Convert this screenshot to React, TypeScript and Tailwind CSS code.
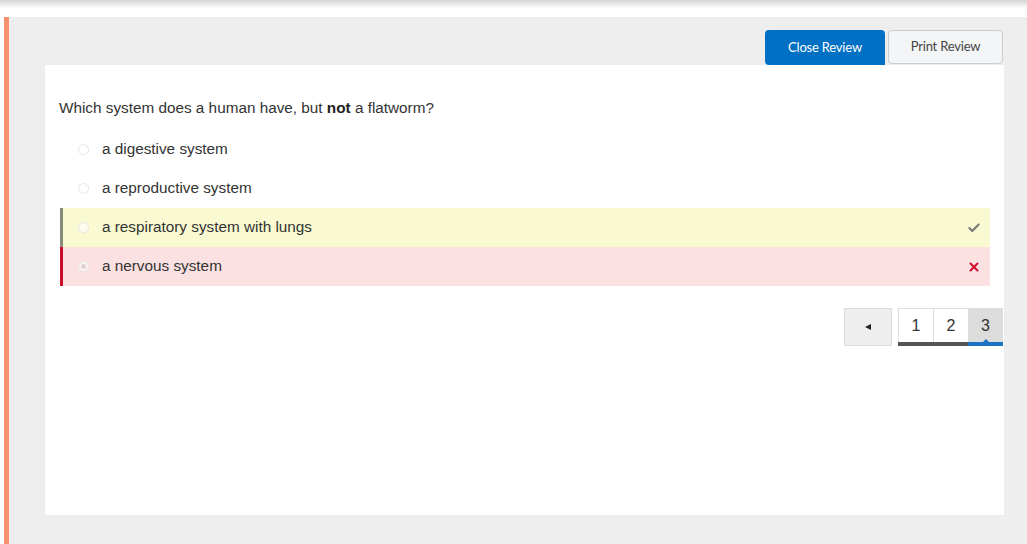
import { Check, X } from 'lucide-react';

type Option = {
  label: string;
  state?: 'correct' | 'wrong';
  selected?: boolean;
};

const options: Option[] = [
  { label: 'a digestive system' },
  { label: 'a reproductive system' },
  { label: 'a respiratory system with lungs', state: 'correct' },
  { label: 'a nervous system', state: 'wrong', selected: true },
];

function Radio({ selected }: { selected?: boolean }) {
  return (
    <span className="w-[11px] h-[11px] rounded-full border border-[#e6e6e6] bg-white/60 flex items-center justify-center shrink-0">
      {selected && <span className="w-[5px] h-[5px] rounded-full bg-[#e2d2d2]"></span>}
    </span>
  );
}

export default function App() {
  return (
    <div className="w-full h-[544px] flex flex-col bg-white overflow-hidden" style={{ fontFamily: '"Liberation Sans", Arial, sans-serif' }}>
      {/* top strip */}
      <div className="h-[17px] shrink-0 bg-gradient-to-b from-[#d4d4d4] via-white to-white"></div>

      <div className="flex-1 flex min-h-0">
        <div className="w-[4px] bg-white shrink-0"></div>
        <div className="w-[5px] bg-[#f7906c] shrink-0"></div>
        <div className="w-[1px] bg-[#f6f1ee] shrink-0"></div>

        {/* gray review panel */}
        <div className="flex-1 bg-[#eeeeee] pl-[35px] pr-[23px] pt-[13px] pb-[29px] flex flex-col">
          <div className="flex justify-end gap-[3px] pr-[1px]" style={{ fontFamily: 'Lato, "Liberation Sans", sans-serif' }}>
            <button className="w-[120px] h-[35px] rounded-t-[4px] rounded-bl-[4px] bg-[#0070c4] text-white text-[13px] tracking-[-0.2px]">
              Close Review
            </button>
            <button className="w-[115px] h-[34px] rounded-[4px] bg-[#f4f5f7] border border-[#c9ccd1] text-[#444] text-[13px] tracking-[-0.2px]">
              Print Review
            </button>
          </div>

          {/* card */}
          <div className="flex-1 bg-white shadow-[0_0_1px_rgba(0,0,0,0.06)] pt-[33px] pl-[14px] pr-[14px] flex flex-col">
            <p className="text-[15.3px] leading-[20px] text-[#333]">
              Which system does a human have, but <b className="font-bold text-[#222]">not</b> a flatworm?
            </p>

            <div className="mt-[12px] ml-[1px] flex flex-col">
              {options.map((o) => (
                <div
                  key={o.label}
                  className={
                    'h-[39px] flex items-center border-l-[3px] pl-[15px] pr-[9px] ' +
                    (o.state === 'correct'
                      ? 'bg-[#fafad2] border-[#8a8a7a]'
                      : o.state === 'wrong'
                      ? 'bg-[#fbe1e1] border-[#c8102e]'
                      : 'border-transparent')
                  }
                >
                  <Radio selected={o.selected} />
                  <span className="ml-[13px] text-[15.3px] text-[#333] flex-1">{o.label}</span>
                  {o.state === 'correct' && <Check className="w-[14px] h-[14px] text-[#777]" strokeWidth={3.5} />}
                  {o.state === 'wrong' && <X className="w-[14px] h-[14px] text-[#d0102e]" strokeWidth={3.5} />}
                </div>
              ))}
            </div>

            {/* pagination */}
            <div className="mt-[22px] flex justify-end gap-[6px] -mr-[13px]">
              <button className="w-[48px] h-[38px] bg-[#eeeeee] border border-[#dcdcdc] flex items-center justify-center">
                <span className="w-0 h-0 border-y-[3.5px] border-y-transparent border-r-[6px] border-r-[#222]"></span>
              </button>
              <div className="flex flex-col">
                <div className="flex h-[34px]">
                  <span className="w-[35px] border-l border-t border-[#dddddd] flex items-center justify-center text-[16px] text-[#333]">1</span>
                  <span className="w-[35px] border-l border-t border-[#dddddd] flex items-center justify-center text-[16px] text-[#333]">2</span>
                  <span className="w-[35px] border-l border-t border-r border-[#dddddd] bg-[#dcdcdc] flex items-center justify-center text-[16px] text-[#333]">3</span>
                </div>
                <div className="flex h-[4px]">
                  <span className="w-[70px] bg-[#555555]"></span>
                  <span className="w-[35px] bg-[#1a72c4] relative">
                    <span className="absolute left-1/2 -translate-x-1/2 -top-[3px] w-0 h-0 border-x-[3px] border-x-transparent border-b-[3px] border-b-[#1a72c4]"></span>
                  </span>
                </div>
              </div>
            </div>
          </div>
        </div>
      </div>
    </div>
  );
}
